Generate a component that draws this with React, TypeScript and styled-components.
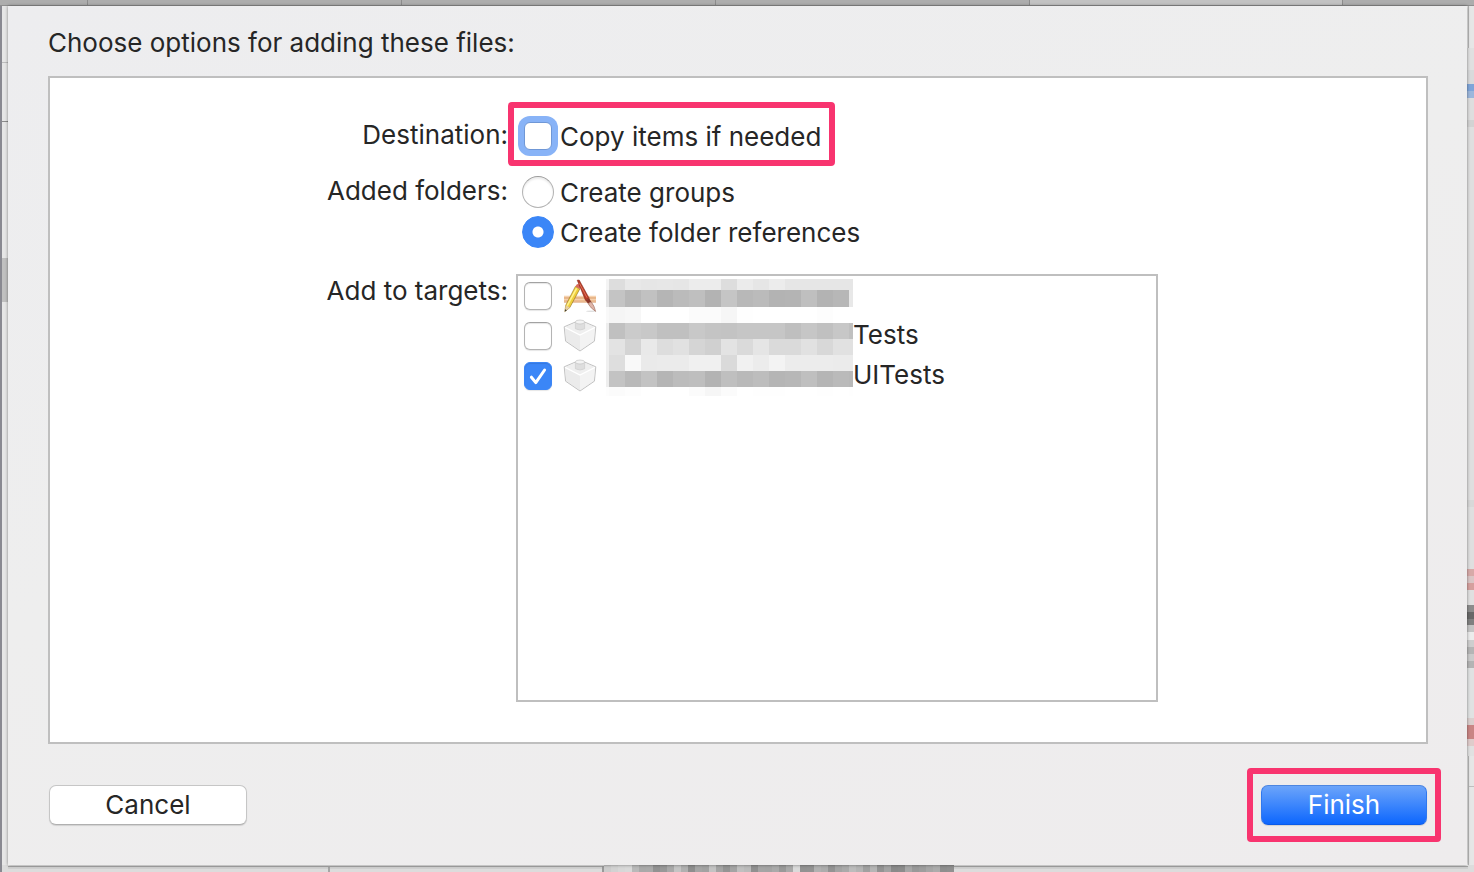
import React from 'react';
import styled, { createGlobalStyle, css } from 'styled-components';

const Global = createGlobalStyle`
  * { box-sizing: border-box; }
  body {
    margin: 0;
    font-family: Inter, 'Liberation Sans', sans-serif;
    font-size: 26px;
    line-height: 32px;
    color: #262626;
    background: #e2e2e2;
  }
`;

const Page = styled.div`
  min-height: 100vh;
  display: grid;
  grid-template-columns: 8px minmax(0, 1fr) 7px;
  grid-template-rows: 6px 1fr 7px;
`;

const TabStrip = styled.div`
  grid-column: 1 / -1;
  display: flex;
  background: #adadad;
  border-bottom: 1px solid #8f8f8f;
`;

const Tab = styled.div<{ $grow: number; $active?: boolean }>`
  flex: ${p => p.$grow} 1 0;
  background: ${p => (p.$active ? '#c2c2c2' : 'transparent')};
  border-right: 1px solid #8c8c8c;
  &:last-child { border-right: 0; }
`;

const EdgeArt = styled.svg`
  display: block;
  width: 100%;
  height: 100%;
`;

const Edge = styled.div`
  overflow: hidden;
  height: 100%;
`;

const BottomEdge = styled.div`
  grid-column: 1 / -1;
  overflow: hidden;
`;

const Sheet = styled.main`
  position: relative;
  display: flex;
  flex-direction: column;
  padding: 21px 39px 40px 40px;
  background: linear-gradient(160deg, #ededef 0%, #eeeeee 45%, #eeeced 100%);
  box-shadow: 0 0 3px rgba(0, 0, 0, 0.45);
`;

const Title = styled.h1`
  margin: 0 0 17px;
  font-size: 26px;
  line-height: 32px;
  font-weight: 400;
`;

const Panel = styled.section`
  flex: 1;
  display: flex;
  flex-direction: column;
  padding: 38px 0 40px;
  background: #fff;
  border: 2px solid #bfbfbf;
`;

const FormRow = styled.div<{ $after?: number; $fill?: boolean }>`
  display: grid;
  grid-template-columns: 458fr 642fr 260fr;
  column-gap: 8px;
  flex: ${p => (p.$fill ? '1' : 'none')};
  margin-bottom: ${p => p.$after ?? 0}px;
`;

const Caption = styled.div`
  text-align: right;
  line-height: 38px;
  white-space: nowrap;
`;

const Options = styled.div`
  display: flex;
  flex-direction: column;
  align-items: flex-start;
  padding-left: 6px;
`;

const highlight = css`
  &::after {
    content: '';
    position: absolute;
    border: 6px solid #f8346f;
    border-radius: 4px;
    pointer-events: none;
  }
`;

const Option = styled.label<{ $marked?: boolean }>`
  position: relative;
  display: flex;
  align-items: center;
  gap: 6px;
  height: 40px;
  white-space: nowrap;
  ${p => p.$marked && css`
    ${highlight}
    &::after { inset: -14px -14px -10px; }
  `}
`;

const OptionText = styled.span`
  height: 40px;
  line-height: 42px;
`;

const Check = styled.input<{ $ring?: boolean }>`
  appearance: none;
  flex: none;
  width: 28px;
  height: 28px;
  margin: 0 2px;
  border: 1px solid #b4b4b4;
  border-top-color: #a2a2a2;
  border-radius: 6px;
  background: #fff;
  box-shadow: inset 0 1px 1px rgba(0, 0, 0, 0.1), 0 1px 1px rgba(0, 0, 0, 0.1);
  ${p => p.$ring && css`
    border-color: #6f97d6;
    box-shadow: 0 0 0 6px #88b3f7;
  `}
  &:checked {
    border-color: #3b86f7;
    background: #3b86f7 url("data:image/svg+xml,%3Csvg xmlns='http://www.w3.org/2000/svg' viewBox='0 0 26 26'%3E%3Cpath d='M6.4 14.2l4.4 5.4L19.6 7' fill='none' stroke='white' stroke-width='3' stroke-linecap='round' stroke-linejoin='round'/%3E%3C/svg%3E") center / 26px 26px no-repeat;
  }
`;

const Radio = styled.input`
  appearance: none;
  flex: none;
  width: 32px;
  height: 32px;
  margin: 0;
  border: 1px solid #b4b4b4;
  border-top-color: #9c9c9c;
  border-radius: 50%;
  background: #fff;
  box-shadow: inset 0 2px 2px rgba(0, 0, 0, 0.08);
  &:checked {
    border-color: #3b86f7;
    background: radial-gradient(circle, #fff 5px, #3b86f7 6px);
    box-shadow: none;
  }
`;

const TargetList = styled.div`
  position: relative;
  min-height: 428px;
  margin-top: 2px;
  padding-left: 4px;
  border: 2px solid #bfbfbf;
`;

const Target = styled.label`
  display: flex;
  align-items: center;
  height: 40px;
`;

const TargetIcon = styled.svg`
  flex: none;
  width: 36px;
  height: 36px;
  margin-left: 8px;
`;

const TargetName = styled.span`
  height: 40px;
  line-height: 38px;
  padding-left: 255px;
`;

const Mosaic = styled.svg`
  position: absolute;
  top: 3px;
  left: 88px;
  width: 247px;
  height: 117px;
`;

const Footer = styled.footer`
  display: flex;
  justify-content: space-between;
  align-items: center;
  margin-top: 41px;
  padding-left: 1px;
`;

const Button = styled.button<{ $primary?: boolean }>`
  position: relative;
  width: 198px;
  height: 40px;
  padding: 0;
  font: inherit;
  line-height: 38px;
  color: #262626;
  background: #fff;
  border: 1px solid #c6c6c6;
  border-bottom-color: #b0b0b0;
  border-radius: 7px;
  box-shadow: 0 1px 1px rgba(0, 0, 0, 0.12);
  ${p => p.$primary && css`
    width: 166px;
    margin-right: 1px;
    color: #fff;
    background: linear-gradient(#6ea6fa, #0a65fe);
    background-origin: border-box;
    border-color: #4d86e0 #2f78ee #0a5ae8;
    ${highlight}
    &::after { inset: -18px -15px; }
  `}
`;

const columns = [0, 3, 19, 35, 51, 67, 83, 99, 115, 131, 147, 163, 179, 195, 211, 227, 243, 247];
const bands = [0, 11, 28, 44, 60, 76, 92, 108, 117];
const shades = [
  'f4 dd e8 e6 e7 e6 ec ec dd eb e6 ec e6 e6 e6 e6 e6',
  'e4 c4 b8 c1 b5 bb bf b3 c5 b8 bb b3 b4 bf b3 b7 e8',
  'f9 f5 f7 ff ff ff fb fb f6 fe ff ff ff ff fd ff ff',
  'ee c0 cb c8 c0 c0 c8 c4 c3 c6 c6 c6 bf c6 c0 c7 c0',
  'f0 e3 d4 e9 dd e1 d5 d0 e3 da e5 da da e1 d8 e1 e1',
  'f0 de f9 ea eb eb f0 f0 da f1 ec f3 ec ec ec eb eb',
  'ee c3 b9 c3 b5 bc be b3 bf b9 bd b5 b7 bf b5 ba b8',
  'fd fb fd ff ff ff fb f6 fb ff fe fe ff ff fe ff fe',
].map(r => r.split(' '));

const NameMosaic = () => (
  <Mosaic viewBox="0 0 247 117" shapeRendering="crispEdges" aria-hidden>
    {shades.map((row, y) =>
      row.map((s, x) => (
        <rect
          key={`${x}-${y}`}
          x={columns[x]}
          y={bands[y]}
          width={columns[x + 1] - columns[x]}
          height={bands[y + 1] - bands[y]}
          fill={`#${s}${s}${s}`}
        />
      )),
    )}
  </Mosaic>
);

const AppIcon = () => (
  <TargetIcon viewBox="0 0 36 36" aria-hidden>
    <ellipse cx="29" cy="33.2" rx="5" ry="0.8" fill="#000" opacity=".12" />
    <rect x="2" y="17.8" width="32" height="6.6" fill="#edbd93" />
    <path d="M2 18.5h32M2 21.4h32" stroke="#f6d3b0" strokeWidth="1" />
    <path d="M2 24.2h32M2 20h32" stroke="#dfa97c" strokeWidth=".7" />
    <path d="M13.4 8.4l4.4 2.5L7.8 29.6l-5 4 1-6.4z" fill="#f0cf3c" stroke="#8d6a1a" strokeWidth=".6" />
    <path d="M14.6 10.4L5.2 27.6" stroke="#fff28f" strokeWidth="1.6" />
    <path d="M3.8 27.2l4 2.4-5 4z" fill="#e6cfa4" />
    <path d="M3.2 31.2l1.7 1-2.1 1.4z" fill="#333" />
    <path d="M13.4 8.4l1.2-2q1.8-.8 3.4.6l.6 1.8-.8 2.1z" fill="#d96b5c" />
    <path d="M15.2 2.2l2-.2 10 18.2-3.8 2z" fill="#b63a26" stroke="#7c2115" strokeWidth=".5" />
    <path d="M17.4 5.4l7.6 14.2" stroke="#e4785f" strokeWidth=".9" />
    <path d="M23.4 22.2l3.8-2 2 3.6-3.2 1.8z" fill="#8a3527" />
    <path d="M26 25.6l3.2-1.8q3.4 4.4 4.4 9.6-4.8-3-7.6-7.8z" fill="#e0b5a8" stroke="#94604f" strokeWidth=".6" />
  </TargetIcon>
);

const BrickIcon = () => (
  <TargetIcon viewBox="0 0 36 36" aria-hidden>
    <path d="M2.2 8.8L13 4.2h10l10.8 4.6-1.4 14.4L18 33 3.6 23.2z" fill="#ededed" stroke="#bcbcbc" strokeWidth=".9" strokeLinejoin="round" />
    <path d="M3 9.2L13.4 4.8h9.2L33 9.2l-15 7.6z" fill="#efefef" />
    <path d="M3 9.8l15 7.6v14.8L4.2 22.8z" fill="#ebebeb" />
    <path d="M33 9.8l-15 7.6v14.8l13.8-9.4z" fill="#f3f3f3" />
    <path d="M3 9.4l15 7.6 15-7.6" fill="none" stroke="#fff" strokeWidth="1.2" />
    <path d="M13.4 4v6.8q4.6 2.6 9.2 0V4z" fill="#dedede" stroke="#c4c4c4" strokeWidth=".5" />
    <ellipse cx="18" cy="4" rx="4.6" ry="2" fill="#f3f3f3" stroke="#bcbcbc" strokeWidth=".6" />
  </TargetIcon>
);

type Strip = [at: number, size: number, color: string];

const leftMarks: Strip[] = [
  [56, 1, '#bdbdbd'],
  [115, 1, '#8b8b8b'],
  [252, 44, '#c0c0c0'],
];

const rightMarks: Strip[] = [
  [42, 22, '#e0e0e0'], [64, 14, '#d9dadb'], [78, 7, '#7fa5d9'], [85, 7, '#9cb7dc'],
  [92, 22, '#dedede'], [114, 7, '#d3d3d3'], [121, 373, '#dfdfdf'], [494, 7, '#d8d8d8'],
  [501, 62, '#dfdfdf'], [563, 7, '#d7aaa8'], [570, 7, '#dac6c6'], [577, 7, '#d5a09e'],
  [584, 15, '#e0e0e0'], [599, 7, '#8c8c8c'], [606, 7, '#686868'], [613, 6, '#808080'],
  [619, 7, '#c5c5c5'], [626, 8, '#ececec'], [634, 7, '#cecece'], [641, 7, '#b5b5b5'],
  [648, 7, '#cbcbcb'], [655, 7, '#b4b4b4'], [662, 50, '#e0e2e2'], [712, 7, '#dbcfce'],
  [719, 14, '#c98584'], [733, 7, '#e0cccb'], [740, 10, '#e1e1e1'],
];

const LeftEdge = () => (
  <Edge>
    <EdgeArt viewBox="0 0 8 859" preserveAspectRatio="none" shapeRendering="crispEdges" aria-hidden>
      <rect width="8" height="859" fill="#e6e6e6" />
      {leftMarks.map(([y, h, c]) => <rect key={y} y={y} width="8" height={h} fill={c} />)}
      <rect width="2" height="859" fill="#898991" />
    </EdgeArt>
  </Edge>
);

const RightEdge = () => (
  <Edge>
    <EdgeArt viewBox="0 0 7 859" preserveAspectRatio="none" shapeRendering="crispEdges" aria-hidden>
      <rect width="7" height="859" fill="#e6e6e6" />
      <rect width="1" height="859" fill="#eeeeee" />
      <rect x="1" width="1" height="859" fill="#b5b5b5" />
      {rightMarks.map(([y, h, c]) => <rect key={y} y={y} width="7" height={h} fill={c} />)}
      <rect x="2" y="780" width="5" height="1" fill="#bebebe" />
    </EdgeArt>
  </Edge>
);

const bottomShades = 'ccc d2d2d2 d7d7d7 d9d9d9 b9b9b9 a9a9a9 aaa 929292 989898 a9a9a9 c4c4c4 b0b0b0 8e8e8e a5a5a5 a2a2a2 c3c3c3 a4a4a4 949494 a4a4a4 c0c0c0 bbb 909090 a5a5a5 a4a4a4 aaa 999 aaa dadada 929292 939393 b1b1b1 acacac 939393 a4a4a4 aaa bcbcbc b4b4b4 a0a0a0 b5b5b5 939393 a3a3a3 8a8a8a 8c8c8c a7a7a7 999 9d9d9d a6a6a6 acacac 8e8e8e 909090'.split(' ');

const BottomStrip = () => (
  <BottomEdge>
    <EdgeArt viewBox="0 0 1474 7" preserveAspectRatio="none" shapeRendering="crispEdges" aria-hidden>
      <rect width="1474" height="7" fill="#dcdcdc" />
      <rect y="0" x="8" width="1460" height="1" fill="#eeeeee" />
      <rect y="1" x="8" width="1460" height="1" fill="#a5a5a5" />
      <rect y="2" x="8" width="1460" height="2" fill="#d0d0d0" />
      <rect width="2" height="7" fill="#898991" />
      <rect x="328" y="1" width="2" height="6" fill="#a6a6a6" />
      <rect x="602" y="1" width="2" height="6" fill="#999" />
      {bottomShades.map((c, i) => (
        <rect key={i} x={604 + i * 7} y="0" width="7" height="7" fill={`#${c}`} />
      ))}
    </EdgeArt>
  </BottomEdge>
);

export default function App() {
  return (
    <>
      <Global />
      <Page>
        <TabStrip>
          <Tab $grow={87} />
          <Tab $grow={314} />
          <Tab $grow={314} />
          <Tab $grow={314} />
          <Tab $grow={314} $active />
          <Tab $grow={131} />
        </TabStrip>
        <LeftEdge />
        <Sheet>
          <Title>Choose options for adding these files:</Title>
          <Panel>
            <FormRow $after={16}>
              <Caption>Destination:</Caption>
              <Options>
                <Option $marked>
                  <Check type="checkbox" $ring />
                  <OptionText>Copy items if needed</OptionText>
                </Option>
              </Options>
            </FormRow>
            <FormRow $after={20} role="radiogroup" aria-labelledby="folders">
              <Caption id="folders">Added folders:</Caption>
              <Options>
                <Option>
                  <Radio type="radio" name="folders" />
                  <OptionText>Create groups</OptionText>
                </Option>
                <Option>
                  <Radio type="radio" name="folders" defaultChecked />
                  <OptionText>Create folder references</OptionText>
                </Option>
              </Options>
            </FormRow>
            <FormRow $fill role="group" aria-labelledby="targets">
              <Caption id="targets">Add to targets:</Caption>
              <TargetList>
                <Target>
                  <Check type="checkbox" />
                  <AppIcon />
                </Target>
                <Target>
                  <Check type="checkbox" />
                  <BrickIcon />
                  <TargetName>Tests</TargetName>
                </Target>
                <Target>
                  <Check type="checkbox" defaultChecked />
                  <BrickIcon />
                  <TargetName>UITests</TargetName>
                </Target>
                <NameMosaic />
              </TargetList>
            </FormRow>
          </Panel>
          <Footer>
            <Button type="button">Cancel</Button>
            <Button type="button" $primary>Finish</Button>
          </Footer>
        </Sheet>
        <RightEdge />
        <BottomStrip />
      </Page>
    </>
  );
}
